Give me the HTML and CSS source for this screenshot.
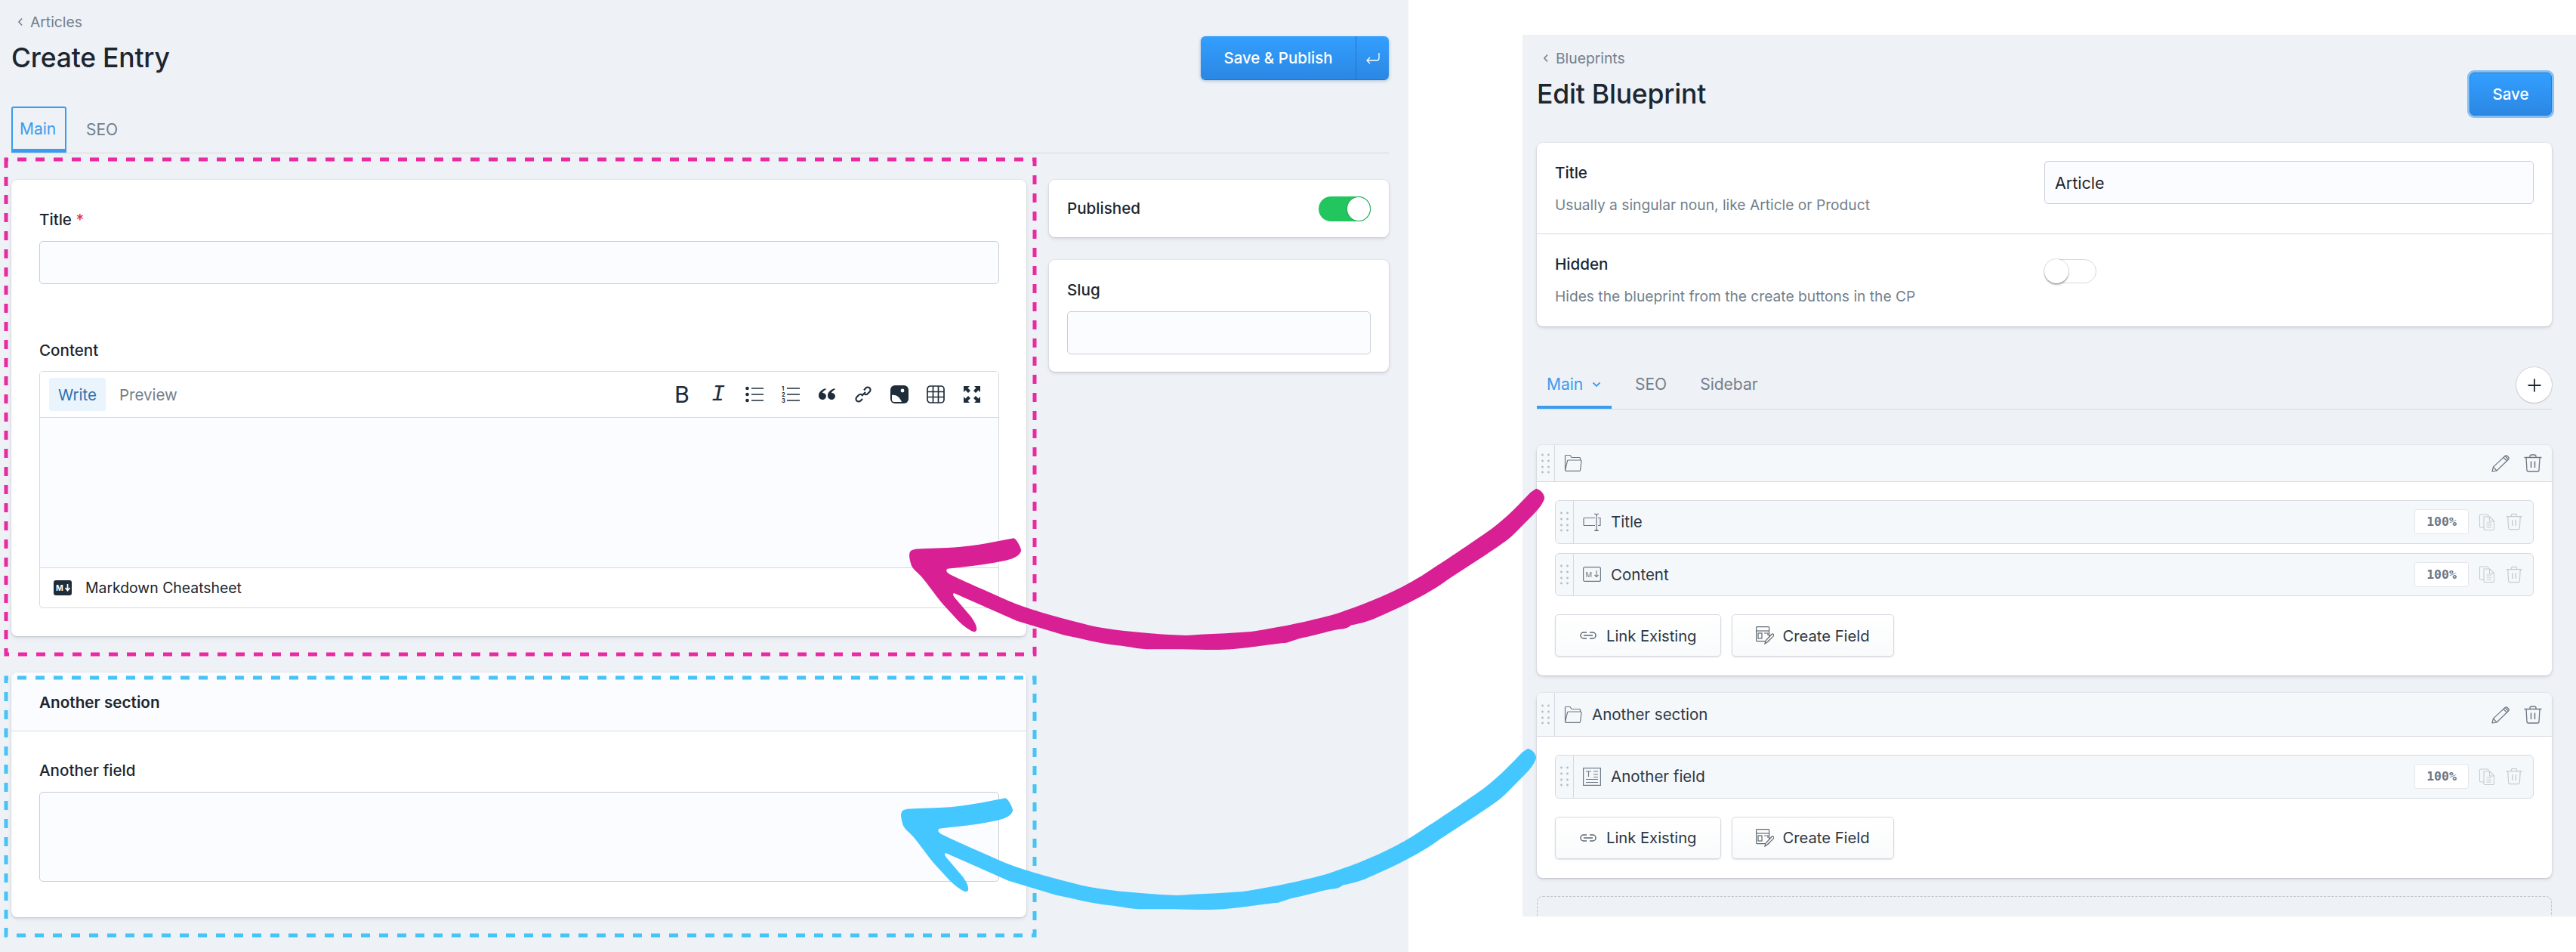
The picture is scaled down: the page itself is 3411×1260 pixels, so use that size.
FILE: index.html
```html
<!DOCTYPE html>
<html lang="en">
<head>
    <meta charset="UTF-8">
    <title>Blueprint sections</title>
    <link rel="stylesheet" href="styles.css">
</head>
<body>
    <svg class="sprites" xmlns="http://www.w3.org/2000/svg">
        <symbol id="i-chevron" viewBox="0 0 8 12"><path d="M6 1.5 2 6l4 4.5" fill="none" stroke="currentColor" stroke-width="1.6"/></symbol>
        <symbol id="i-folder" viewBox="0 0 24 24"><g fill="none" stroke="currentColor" stroke-width="1.2"><path d="M1.500 21V2.500a1 1 0 0 1 1-1h5.500l2 3h10.500a1 1 0 0 1 1 1V8"/><path d="M1.500 21.500 4.500 9a1 1 0 0 1 1-1h16.500a1 1 0 0 1 1 1.200L21.500 21.500a1 1 0 0 1-1 .8H2.500a1 1 0 0 1-1-.8z"/></g></symbol>
        <symbol id="i-pencil" viewBox="0 0 24 24"><g fill="none" stroke="currentColor" stroke-width="1.200" stroke-linejoin="round"><path d="M1 23l1.500-6L18 2.500a2.200 2.200 0 0 1 3 0l1.500 1.500a2.200 2.200 0 0 1 0 3L7 22z"/><path d="M2.500 17 7 22M16 4.500l4.500 4.500M18 2.500l4.500 4.500"/></g></symbol>
        <symbol id="i-trash" viewBox="0 0 24 24"><g fill="none" stroke="currentColor" stroke-width="1.300"><path d="M.5 4.500h23M8 4.500V3a2 2 0 0 1 2-2h4a2 2 0 0 1 2 2v1.500"/><path d="M3 4.500 4 21a2 2 0 0 0 2 2h12a2 2 0 0 0 2-2l1-16.500"/><path d="M9.500 9.500v8.500M14.500 9.500v8.500" stroke-width="1.500"/></g></symbol>
        <symbol id="i-copy" viewBox="0 0 20 22"><g fill="none" stroke="currentColor" stroke-width="1.100"><path d="M6 18H2a1.500 1.500 0 0 1-1.500-1.500v-14A1.500 1.500 0 0 1 2 1h8.500A1.500 1.500 0 0 1 12 2.500V4"/><path d="M6 4h8l5.500 5.500V20a1.500 1.500 0 0 1-1.500 1.500H7.500A1.500 1.500 0 0 1 6 20zM13.500 4v6h6M9.500 12h6.500M9.500 15h6.500M9.500 18h6.500"/></g></symbol>
        <symbol id="i-link" viewBox="0 0 24 12"><g fill="none" stroke="currentColor" stroke-width="1.500"><path d="M10 2H6a4 4 0 0 0 0 8h4M14 2h4a4 4 0 0 1 0 8h-4"/><path d="M6 6h12"/></g></symbol>
        <symbol id="i-create" viewBox="0 0 24 24"><g fill="none" stroke="currentColor" stroke-width="1.200"><rect x=".600" y=".600" width="17" height="19" rx="1"/><path d="M.600 6h17"/><rect x="3" y="9" width="5" height="7"/><path d="M11 9h5v3"/></g><path d="M12 23l1-4 8-8.500a1.600 1.600 0 0 1 2.300 2.300L15 21z" fill="#fff" stroke="currentColor" stroke-width="1.200"/></symbol>
        <symbol id="i-drag" viewBox="0 0 11 27"><g fill="currentColor"><circle cx="1.500" cy="2" r="1.400"/><circle cx="9.500" cy="2" r="1.400"/><circle cx="1.500" cy="10" r="1.400"/><circle cx="9.500" cy="10" r="1.400"/><circle cx="1.500" cy="18" r="1.400"/><circle cx="9.500" cy="18" r="1.400"/><circle cx="1.500" cy="25" r="1.400"/><circle cx="9.500" cy="25" r="1.400"/></g></symbol>
    </svg>

    <section class="panel entry">
        <a class="crumb"><svg class="crumb-icon"><use href="#i-chevron"/></svg>Articles</a>
        <div class="page-head">
            <h1>Create Entry</h1>
            <div class="split-btn">
                <span class="split-main">Save &amp; Publish</span>
                <span class="split-side">
                    <svg width="20" height="18" viewBox="0 0 20 18" fill="none" stroke="currentColor" stroke-width="1.300"><path d="M18 2v7a3 3 0 0 1-3 3H2M6 8l-4 4 4 4"/></svg>
                </span>
            </div>
        </div>
        <nav class="entry-tabs">
            <a class="entry-tab active">Main</a>
            <a class="entry-tab">SEO</a>
        </nav>
        <div class="entry-grid">
            <div class="entry-main">
                <div class="card fields-card">
                    <label class="label">Title <span class="req">*</span></label>
                    <div class="input"></div>
                    <label class="label content-label">Content</label>
                    <div class="editor">
                        <div class="editor-bar">
                            <span class="mode active">Write</span>
                            <span class="mode">Preview</span>
                            <div class="tools">
                                <span class="tool tool-b">B</span>
                                <span class="tool tool-i">I</span>
                                <span class="tool"><svg width="24" height="24" viewBox="0 0 24 24"><g fill="currentColor"><circle cx="2.500" cy="4" r="2.300"/><circle cx="2.500" cy="12" r="2.300"/><circle cx="2.500" cy="20" r="2.300"/></g><path d="M8 4h16M8 12h16M8 20h16" stroke="currentColor" stroke-width="1.700"/></svg></span>
                                <span class="tool"><svg width="24" height="24" viewBox="0 0 24 24"><g fill="currentColor" font-family="Inter, sans-serif" font-size="7.500" font-weight="700"><text x="0" y="7">1</text><text x="0" y="15">2</text><text x="0" y="23">3</text></g><path d="M7 4h17M7 12h17M7 20h17" stroke="currentColor" stroke-width="1.700"/></svg></span>
                                <span class="tool"><svg width="24" height="24" viewBox="0 0 24 24" fill="currentColor"><path d="M6 19a5 5 0 0 1-5-5.500C1 9 5 5.500 10 4l.8 1.600C8 7 6.500 8.500 6 10a5 5 0 0 1 5 4.500A4.800 4.800 0 0 1 6 19zM18 19a5 5 0 0 1-5-5.500C13 9 17 5.500 22 4l.8 1.600C20 7 18.500 8.500 18 10a5 5 0 0 1 5 4.500A4.800 4.800 0 0 1 18 19z"/></svg></span>
                                <span class="tool"><svg width="24" height="24" viewBox="0 0 24 24" fill="none" stroke="currentColor" stroke-width="2.100"><path d="M10 14l5-5"/><path d="M13 6.500l2.500-3a3.500 3.500 0 0 1 5 0 3.500 3.500 0 0 1 0 5L18 11a3.500 3.500 0 0 1-4.500.5"/><path d="M11 18l-2.500 2.500a3.500 3.500 0 0 1-5 0 3.500 3.500 0 0 1 0-5L6 13a3.500 3.500 0 0 1 4.500-.5"/></svg></span>
                                <span class="tool"><svg width="24" height="24" viewBox="0 0 24 24"><rect width="24" height="24" rx="6" fill="currentColor"/><circle cx="16" cy="7" r="2.400" fill="#fff"/><path d="M2 13c5-1 10 2 13 9H5a3 3 0 0 1-3-3z" fill="#fff"/></svg></span>
                                <span class="tool"><svg width="24" height="24" viewBox="0 0 24 24" fill="none" stroke="currentColor" stroke-width="1.700"><rect x="1" y="1" width="22" height="22" rx="4"/><path d="M1 8.500h22M1 15.500h22M8.500 1v22M15.500 1v22"/></svg></span>
                                <span class="tool"><svg width="24" height="24" viewBox="0 0 24 24" fill="currentColor"><path d="M1 1h8L6.500 3.500l3.500 3.500-3 3-3.500-3.500L1 9zM23 1v8l-2.500-2.500L17 10l-3-3 3.500-3.500L15 1zM1 23v-8l2.500 2.500L7 14l3 3-3.500 3.500L9 23zM23 23h-8l2.500-2.500L14 17l3-3 3.500 3.500L23 15z"/></svg></span>
                            </div>
                        </div>
                        <div class="editor-body"></div>
                        <div class="editor-foot">
                            <svg width="24" height="20" viewBox="0 0 24 20"><rect width="24" height="20" rx="3" fill="#1f2d3a"/><text x="3" y="14" fill="#fff" font-family="Inter, sans-serif" font-size="10.500" font-weight="700">M</text><path d="M18.500 5v8M15.500 10l3 3.500 3-3.500" fill="none" stroke="#fff" stroke-width="1.800"/></svg>
                            <span>Markdown Cheatsheet</span>
                        </div>
                    </div>
                </div>
                <div class="card section-card">
                    <div class="section-title">Another section</div>
                    <div class="section-body">
                        <label class="label">Another field</label>
                        <div class="input textarea"></div>
                    </div>
                </div>
            </div>
            <aside class="entry-side">
                <div class="card publish-card">
                    <span class="label">Published</span>
                    <span class="toggle on"><i></i></span>
                </div>
                <div class="card slug-card">
                    <label class="label">Slug</label>
                    <div class="input"></div>
                </div>
            </aside>
        </div>
    </section>

    <section class="panel blueprint">
        <a class="crumb"><svg class="crumb-icon"><use href="#i-chevron"/></svg>Blueprints</a>
        <div class="page-head">
            <h1>Edit Blueprint</h1>
            <span class="save-btn">Save</span>
        </div>
        <div class="card settings">
            <div class="setting">
                <div class="setting-text">
                    <div class="label">Title</div>
                    <div class="hint">Usually a singular noun, like Article or Product</div>
                </div>
                <div class="input filled">Article</div>
            </div>
            <div class="setting">
                <div class="setting-text">
                    <div class="label">Hidden</div>
                    <div class="hint">Hides the blueprint from the create buttons in the CP</div>
                </div>
                <span class="toggle off"><i></i></span>
            </div>
        </div>
        <nav class="bp-tabs">
            <a class="bp-tab active">Main <svg width="12" height="8" viewBox="0 0 12 8" fill="none" stroke="currentColor" stroke-width="1.800"><path d="M1.500 1.500 6 6l4.500-4.500"/></svg></a>
            <a class="bp-tab">SEO</a>
            <a class="bp-tab">Sidebar</a>
            <span class="add-btn"><svg width="20" height="20" viewBox="0 0 20 20" stroke="currentColor" stroke-width="1.800"><path d="M10 1.500v17M1.500 10h17"/></svg></span>
        </nav>

        <div class="bp-section">
            <div class="bp-head short">
                <span class="drag"><svg class="drag-dots"><use href="#i-drag"/></svg></span>
                <svg class="row-icon"><use href="#i-folder"/></svg>
                <span class="head-actions">
                    <svg class="act-icon"><use href="#i-pencil"/></svg>
                    <svg class="act-icon"><use href="#i-trash"/></svg>
                </span>
            </div>
            <div class="bp-body">
                <div class="field-row">
                    <span class="drag"><svg class="drag-dots"><use href="#i-drag"/></svg></span>
                    <svg class="row-icon" viewBox="0 0 24 24" fill="none" stroke="currentColor" stroke-width="1.200"><path d="M16 6.500H2a1 1 0 0 0-1 1v8a1 1 0 0 0 1 1h14M20 6.500h3v10h-3M15 1c2 0 3 1 3 2.500V21c0 1.500-1 2.500-3 2.500M21 1c-2 0-3 1-3 2.500M21 23.500c-2 0-3-1-3-2.500"/></svg>
                    <span class="field-name">Title</span>
                    <span class="width-pill">100%</span>
                    <svg class="copy-icon"><use href="#i-copy"/></svg>
                    <svg class="del-icon"><use href="#i-trash"/></svg>
                </div>
                <div class="field-row">
                    <span class="drag"><svg class="drag-dots"><use href="#i-drag"/></svg></span>
                    <svg class="row-icon" viewBox="0 0 24 20"><rect x=".6" y=".6" width="22.800" height="18.800" rx="2" fill="none" stroke="currentColor" stroke-width="1.200"/><text x="3.500" y="13.500" fill="currentColor" font-family="Inter, sans-serif" font-size="9.500">M</text><path d="M18 5v8.500M15.500 11l2.500 2.500 2.500-2.500" fill="none" stroke="currentColor" stroke-width="1.100"/></svg>
                    <span class="field-name">Content</span>
                    <span class="width-pill">100%</span>
                    <svg class="copy-icon"><use href="#i-copy"/></svg>
                    <svg class="del-icon"><use href="#i-trash"/></svg>
                </div>
                <div class="bp-actions">
                    <span class="ghost-btn"><svg class="btn-icon link"><use href="#i-link"/></svg>Link Existing</span>
                    <span class="ghost-btn"><svg class="btn-icon"><use href="#i-create"/></svg>Create Field</span>
                </div>
            </div>
        </div>

        <div class="bp-section">
            <div class="bp-head">
                <span class="drag"><svg class="drag-dots"><use href="#i-drag"/></svg></span>
                <svg class="row-icon"><use href="#i-folder"/></svg>
                <span class="field-name">Another section</span>
                <span class="head-actions">
                    <svg class="act-icon"><use href="#i-pencil"/></svg>
                    <svg class="act-icon"><use href="#i-trash"/></svg>
                </span>
            </div>
            <div class="bp-body">
                <div class="field-row">
                    <span class="drag"><svg class="drag-dots"><use href="#i-drag"/></svg></span>
                    <svg class="row-icon" viewBox="0 0 24 24" fill="none" stroke="currentColor" stroke-width="1.200"><rect x=".6" y=".6" width="22.800" height="22.800"/><path d="M4 5h7M7.500 5v7M14 5h6M14 9h6M14 12.500h6M4 15.500h16M4 19.500h16"/></svg>
                    <span class="field-name">Another field</span>
                    <span class="width-pill">100%</span>
                    <svg class="copy-icon"><use href="#i-copy"/></svg>
                    <svg class="del-icon"><use href="#i-trash"/></svg>
                </div>
                <div class="bp-actions">
                    <span class="ghost-btn"><svg class="btn-icon link"><use href="#i-link"/></svg>Link Existing</span>
                    <span class="ghost-btn"><svg class="btn-icon"><use href="#i-create"/></svg>Create Field</span>
                </div>
            </div>
        </div>

        <div class="bp-new"></div>
    </section>

    <!-- hand drawn annotations sit over both screens -->
    <svg class="marks" width="3411" height="1260" viewBox="0 0 3411 1260">
        <defs>
            <path id="swoosh" transform="translate(1180 630) scale(.574 .3333)" d="M1488 50C1500 55 1508 75 1507 90C1503 110 1495 130 1480 155L1440 225C1420 260 1395 285 1370 315L1285 410C1250 455 1210 490 1175 520L1130 555C1105 575 1085 585 1062 592C1055 600 1050 608 1035 608C1015 612 985 630 950 642C935 648 925 655 912 662C885 665 835 680 790 687C760 692 720 690 670 688L600 688C570 688 555 678 520 672C480 665 440 645 400 632L290 575L145 465C140 470 145 480 150 490L185 560C195 585 198 600 197 612C195 620 190 620 185 615C175 605 165 592 155 575L120 510C100 470 85 430 70 400C60 380 48 370 45 345C42 325 40 310 45 298C50 292 55 290 70 289L130 285C180 282 230 265 283 247C290 252 298 280 300 295C298 315 285 328 265 335C220 352 175 360 130 368C125 375 128 382 135 390C170 420 225 460 270 495C310 525 370 555 440 585C490 610 560 620 640 630L680 633C720 628 780 625 830 618C880 605 960 580 1030 545C1090 510 1160 465 1225 395C1270 345 1340 265 1385 210C1420 165 1450 110 1475 65Z"/>
        </defs>
        <rect class="dash pink" x="8" y="211" width="1362" height="655"/>
        <rect class="dash sky" x="8" y="897" width="1362" height="341"/>
        <use href="#swoosh" class="swoosh-pink"/>
        <use href="#swoosh" class="swoosh-sky" x="-11" y="344"/>
    </svg>
</body>
</html>
```

FILE: styles.css
```css
:root {
    --panel: #eef1f5;
    --ink: #1c2630;
    --grey: #737f8c;
    --blue: #3a9bf0;
    --line: #d5dae1;
    --input-bg: #fbfcff;
    --input-line: #c8ced6;
}
* {
    box-sizing: border-box;
}
body {
    margin: 0;
    width: 3411px;
    height: 1260px;
    position: relative;
    overflow: hidden;
    display: flex;
    align-items: flex-start;
    background: #fff;
    color: var(--ink);
    font-family: Inter, sans-serif;
    font-size: 20.5px;
}
.sprites {
    display: none;
}
.panel {
    background: var(--panel);
}
.entry {
    width: 1865px;
    height: 1260px;
    padding: 18px 26px 0 15px;
}
.blueprint {
    width: 1395px;
    height: 1167px;
    margin: 46px 0 0 151px;
    padding: 20px 32px 0 19px;
    overflow: hidden;
}
.crumb {
    display: flex;
    align-items: center;
    gap: 9px;
    height: 22px;
    margin-bottom: 8px;
    padding-left: 8px;
    color: var(--grey);
    font-size: 19.3px;
}
.crumb-icon {
    width: 8px;
    height: 12px;
}
.page-head {
    display: flex;
    align-items: center;
    justify-content: space-between;
    height: 57px;
}
h1 {
    margin: 0;
    font-size: 35.5px;
    font-weight: 500;
    letter-spacing: -0.2px;
}
.split-btn {
    display: flex;
    height: 57px;
    color: #fff;
    font-weight: 500;
    border-radius: 6px;
    background: linear-gradient(#339fff, #2b87e3);
    box-shadow: 0 1px 0 #2a74c0, 0 2px 4px rgba(30, 80, 150, 0.35);
}
.split-main {
    display: flex;
    align-items: center;
    justify-content: center;
    width: 205px;
}
.split-side {
    display: flex;
    align-items: center;
    justify-content: center;
    width: 44px;
    border-left: 1px solid #2674c4;
}
.save-btn {
    display: flex;
    align-items: center;
    justify-content: center;
    width: 109px;
    height: 57px;
    color: #fff;
    font-weight: 500;
    border-radius: 6px;
    border: 1px solid #2a78c8;
    background: linear-gradient(#339fff, #2b87e3);
    box-shadow: 0 0 0 3px #84bff6;
}
.entry-tabs {
    display: flex;
    height: 62px;
    margin-top: 36px;
    border-bottom: 1px solid var(--line);
}
.entry-tab {
    display: flex;
    align-items: center;
    padding: 0 11px;
    color: var(--grey);
    font-size: 21px;
}
.entry-tab.active {
    width: 73px;
    margin-right: 15px;
    color: var(--blue);
    border: 2px solid var(--blue);
    border-bottom-width: 5px;
    border-radius: 3px 3px 0 0;
    padding: 0 9px;
}
.entry-grid {
    display: grid;
    grid-template-columns: 1344px 450px;
    gap: 30px;
    margin-top: 35px;
}
.card {
    background: #fff;
    border-radius: 8px;
    box-shadow: 0 0 0 1px rgba(49, 49, 93, 0.03), 0 2px 5px rgba(49, 49, 93, 0.12), 0 1px 2px rgba(0, 0, 0, 0.1);
}
.entry-main,
.entry-side {
    display: flex;
    flex-direction: column;
}
.entry-main {
    gap: 48px;
}
.entry-side {
    gap: 30px;
}
.fields-card {
    height: 604px;
    padding: 41px 36px 0 37px;
}
.label {
    display: block;
    height: 24px;
    line-height: 24px;
    font-weight: 450;
    font-size: 20.6px;
}
.req {
    color: #e0383e;
}
.input {
    height: 57px;
    margin-top: 16px;
    background: var(--input-bg);
    border: 1px solid var(--input-line);
    border-radius: 5px;
}
.content-label {
    margin-top: 76px;
}
.editor {
    height: 314px;
    margin-top: 15px;
    border: 1px solid var(--line);
    border-radius: 5px;
    overflow: hidden;
}
.editor-bar {
    display: flex;
    align-items: center;
    gap: 6px;
    height: 61px;
    padding: 0 11px 0 12px;
    background: #fff;
    border-bottom: 1px solid var(--line);
}
.mode {
    display: flex;
    align-items: center;
    height: 44px;
    padding: 0 12px;
    color: var(--grey);
    border-radius: 4px;
}
.mode.active {
    color: #2c71ab;
    background: #eaf4fd;
}
.tools {
    display: flex;
    margin-left: auto;
}
.tool {
    display: flex;
    align-items: center;
    justify-content: center;
    width: 48px;
    height: 30px;
    color: #1f2d3a;
}
.tool-b {
    font-family: Roboto, sans-serif;
    font-size: 32px;
}
.tool-i {
    font-family: "Liberation Mono", monospace;
    font-style: italic;
    font-size: 30px;
}
.editor-body {
    height: 198px;
    background: var(--input-bg);
}
.editor-foot {
    display: flex;
    align-items: center;
    gap: 18px;
    height: 53px;
    padding-left: 18px;
    font-size: 19.4px;
    border-top: 1px solid var(--line);
}
.section-card {
    height: 324px;
}
.section-title {
    display: flex;
    align-items: center;
    height: 78px;
    padding: 2px 37px 0;
    font-size: 20.7px;
    font-weight: 600;
    background: var(--input-bg);
    border-bottom: 1px solid var(--line);
    border-radius: 8px 8px 0 0;
}
.section-body {
    padding: 40px 36px 0 37px;
}
.textarea {
    height: 119px;
}
.publish-card {
    display: flex;
    align-items: center;
    justify-content: space-between;
    height: 76px;
    padding: 0 24px;
}
.toggle {
    display: flex;
    width: 69px;
    height: 33px;
    border-radius: 17px;
}
.toggle i {
    display: block;
    width: 32px;
    border-radius: 50%;
    background: #fff;
}
.toggle.on {
    justify-content: flex-end;
    background: #22c55e;
}
.toggle.on i {
    border: 1px solid #1da851;
}
.toggle.off {
    height: 32px;
    margin-top: 9px;
    background: #fff;
    border: 1px solid var(--line);
}
.toggle.off i {
    margin: -1px;
    box-shadow: 0 2px 2px rgba(0, 0, 0, 0.3), 0 0 0 1px rgba(0, 0, 0, 0.1);
}
.slug-card {
    height: 148px;
    padding: 28px 24px 0;
}
.settings {
    margin-top: 36px;
    height: 243px;
}
.setting {
    display: flex;
    height: 121px;
    padding: 24px 24px 0;
    border-bottom: 1px solid var(--line);
}
.setting:last-child {
    border-bottom: none;
}
.setting-text {
    width: 648px;
    padding-top: 4px;
}
.hint {
    margin-top: 18px;
    line-height: 24px;
    font-size: 19.2px;
    color: var(--grey);
}
.filled {
    flex: 1;
    display: flex;
    align-items: center;
    margin-top: 0;
    padding-left: 13px;
    font-size: 21.5px;
}
.bp-tabs {
    display: flex;
    gap: 18px;
    height: 64px;
    margin-top: 46px;
    font-size: 21px;
    border-bottom: 1px solid var(--line);
}
.bp-tab {
    display: flex;
    align-items: center;
    gap: 12px;
    height: 63px;
    padding: 2px 13px 0;
    color: var(--grey);
    border-bottom: 4px solid transparent;
}
.bp-tab.active {
    width: 99px;
    color: var(--blue);
    border-bottom-color: var(--blue);
}
.add-btn {
    display: flex;
    align-items: center;
    justify-content: center;
    width: 47px;
    height: 47px;
    margin: 8px 0 0 auto;
    background: #fff;
    border-radius: 50%;
    box-shadow: 0 0 0 1px rgba(0, 0, 0, 0.1), 0 1px 2px rgba(0, 0, 0, 0.1);
}
.bp-section {
    margin-top: 47px;
    background: #fff;
    border-radius: 8px;
    box-shadow: 0 0 0 1px rgba(49, 49, 93, 0.03), 0 2px 5px rgba(49, 49, 93, 0.12), 0 1px 2px rgba(0, 0, 0, 0.1);
}
.bp-section + .bp-section {
    margin-top: 23px;
}
.bp-head {
    display: flex;
    align-items: center;
    height: 58px;
    background: #f5f8fb;
    border-bottom: 1px solid var(--line);
    border-radius: 8px 8px 0 0;
}
.bp-head.short {
    height: 49px;
}
.drag {
    display: flex;
    align-items: center;
    justify-content: center;
    flex: none;
    align-self: stretch;
    width: 24px;
    border-right: 1px solid var(--line);
    color: #b4bcc4;
}
.drag-dots {
    width: 11px;
    height: 27px;
}
.row-icon {
    flex: none;
    width: 24px;
    height: 24px;
    margin-left: 12px;
    color: #6c7885;
}
.bp-head .field-name {
    margin-left: 13px;
}
.head-actions {
    display: flex;
    gap: 19px;
    margin-left: auto;
    padding-right: 13px;
}
.act-icon {
    width: 24px;
    height: 24px;
    color: #6c7885;
}
.bp-body {
    display: flex;
    flex-direction: column;
    gap: 12px;
    padding: 24px 24px 25px;
}
.field-row {
    display: flex;
    align-items: center;
    height: 57.5px;
    background: #f5f8fb;
    border: 1px solid var(--line);
    border-radius: 6px;
    overflow: hidden;
}
.field-name {
    margin-left: 13px;
    color: #2c3742;
}
.width-pill {
    display: flex;
    align-items: center;
    justify-content: center;
    width: 72px;
    height: 33px;
    margin-left: auto;
    background: #fff;
    border: 1px solid #e3e7ec;
    border-radius: 3px;
    color: #6c7885;
    font-family: "DejaVu Sans Mono", monospace;
    font-weight: 700;
    font-size: 16.5px;
}
.copy-icon {
    width: 20px;
    height: 22px;
    margin-left: 14px;
    color: #c3cad2;
}
.del-icon {
    width: 22px;
    height: 23px;
    margin: 0 14px 0 15px;
    color: #c3cad2;
}
.bp-actions {
    display: flex;
    gap: 14px;
    margin-top: 12px;
}
.ghost-btn {
    display: flex;
    align-items: center;
    gap: 12px;
    height: 56px;
    padding: 0 31px;
    font-size: 20.2px;
    color: #2c3742;
    background: linear-gradient(#fff, #f9fafb);
    border: 1px solid var(--line);
    border-radius: 5px;
    box-shadow: 0 1px 2px rgba(0, 0, 0, 0.12);
}
.btn-icon {
    width: 24px;
    height: 24px;
    color: #5d6974;
}
.btn-icon.link {
    height: 12px;
}
.bp-new {
    height: 120px;
    margin-top: 24px;
    border: 1px dashed #bcc4cc;
    border-radius: 8px;
}
.marks {
    position: absolute;
    top: 0;
    left: 0;
    pointer-events: none;
}
.dash {
    fill: none;
    stroke-width: 5;
    stroke-dasharray: 12 12;
    stroke-dashoffset: 9;
}
.dash.pink {
    stroke: #ea2aa0;
}
.dash.sky {
    stroke: #45c4f5;
}
.swoosh-pink {
    fill: #d81f93;
}
.swoosh-sky {
    fill: #44c7ff;
}
```
